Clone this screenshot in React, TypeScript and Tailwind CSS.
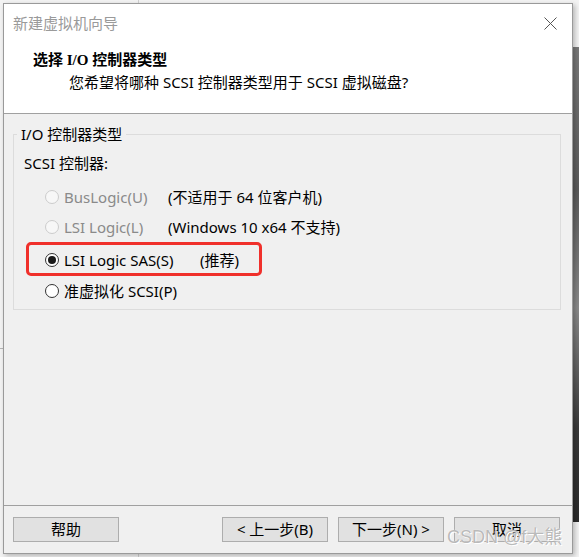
import React from "react";

const FONT = { fontFamily: '"Noto Sans", "Noto Sans CJK SC", sans-serif' };

function Radio({ state }: { state: "disabled" | "checked" | "off" }) {
  if (state === "disabled") {
    return <span className="box-border inline-block h-[14px] w-[14px] shrink-0 rounded-full border border-[#cccccc] bg-[#f7f7f7]" />;
  }
  return (
    <span className="box-border flex h-[14px] w-[14px] shrink-0 items-center justify-center rounded-full border border-[#333333] bg-white">
      {state === "checked" && <span className="block h-[8px] w-[8px] rounded-full bg-[#1a1a1a]" />}
    </span>
  );
}

function Btn({ children }: { children: React.ReactNode }) {
  return (
    <div className="box-border flex h-[25px] w-[106px] items-center justify-center border border-[#adadad] bg-[#e1e1e1] text-[15px] text-black">
      {children}
    </div>
  );
}

export default function App() {
  return (
    <div className="relative h-[557px] w-[579px] overflow-hidden bg-[#f3f3f3]" style={FONT}>
      {/* desktop bits behind the window */}
      <div className="absolute left-[138px] top-0 h-full w-px bg-[#d0d0d0]" />
      <div className="absolute left-0 top-[348px] h-px w-[3px] bg-[#b5b5b5]" />
      <div className="absolute left-[573px] top-[47px] h-[475px] w-[6px] bg-[linear-gradient(180deg,#7a7a7a,#5a5a5a_30%,#8a8a8a_55%,#3a3a3a_80%,#2a2a2a)]" />

      {/* dialog window */}
      <div className="absolute left-[3px] top-[3px] box-border flex h-[551px] w-[570px] flex-col border border-[#9a9a9a] bg-[#f0f0f0] shadow-[2px_2px_5px_rgba(0,0,0,0.25)]">
        {/* white top section */}
        <div className="box-border flex h-[110px] flex-col border-b border-[#a0a0a0] bg-white">
          <div className="flex h-[37px] items-center justify-between pl-[9px] pr-[15px]">
            <span className="text-[15px] leading-[20px] text-[#9a9a9a]">新建虚拟机向导</span>
            <svg width="13" height="13" viewBox="0 0 13 13" className="mt-[1px]">
              <path d="M0.5 0.5 L12.5 12.5 M12.5 0.5 L0.5 12.5" stroke="#555" strokeWidth="1" fill="none" />
            </svg>
          </div>
          <div className="pl-[29px] pt-[9px]">
            <div
              className="text-[15px] font-bold leading-[20px] text-black"
              style={{ fontFamily: '"Liberation Serif", "Noto Sans CJK SC", serif' }}
            >
              选择 I/O 控制器类型
            </div>
            <div className="mt-[2px] pl-[36px] text-[15px] leading-[20px] text-black">
              您希望将哪种 SCSI 控制器类型用于 SCSI 虚拟磁盘?
            </div>
          </div>
        </div>

        {/* body */}
        <div className="flex-1 pl-[9px] pr-[11px] pt-[10px]">
          <fieldset className="box-border border border-[#dcdcdc] pb-[8px]">
            <legend className="ml-[3px] px-[4px] text-[15px] leading-[20px] text-black">I/O 控制器类型</legend>
            <div className="pl-[10px] pt-[9px] text-[15px] leading-[20px] text-black">SCSI 控制器:</div>

            <div className="mt-[14px] flex h-[20px] items-center pl-[31px] text-[15px] leading-[20px]">
              <Radio state="disabled" />
              <span className="ml-[5px] w-[104px] text-[#8a8a8a]">BusLogic(U)</span>
              <span className="text-black">(不适用于 64 位客户机)</span>
            </div>
            <div className="mt-[10px] flex h-[20px] items-center pl-[31px] text-[15px] leading-[20px]">
              <Radio state="disabled" />
              <span className="ml-[5px] w-[104px] text-[#8a8a8a]">LSI Logic(L)</span>
              <span className="text-black">(Windows 10 x64 不支持)</span>
            </div>
            <div className="relative mt-[13px] flex h-[20px] items-center pl-[31px] text-[15px] leading-[20px]">
              <Radio state="checked" />
              <span className="ml-[5px] w-[136px] text-black">LSI Logic SAS(S)</span>
              <span className="text-black">(推荐)</span>
              <div className="absolute left-[12px] top-[-8px] box-border h-[34px] w-[236px] rounded-[5px] border-[3px] border-[#f0302b]" />
            </div>
            <div className="mt-[11px] flex h-[20px] items-center pl-[31px] text-[15px] leading-[20px]">
              <Radio state="off" />
              <span className="ml-[5px] text-black">准虚拟化 SCSI(P)</span>
            </div>
          </fieldset>
        </div>

        {/* footer */}
        <div className="box-border flex h-[48px] items-center justify-between border-t border-[#a0a0a0] pl-[9px] pr-[12px]">
          <Btn>帮助</Btn>
          <div className="flex gap-[10px]">
            <Btn>&lt; 上一步(B)</Btn>
            <Btn>下一步(N) &gt;</Btn>
            <Btn>取消</Btn>
          </div>
        </div>
      </div>

      {/* watermark */}
      <div
        className="absolute left-[447px] top-[526px] text-[18px] leading-[22px] text-[#a8a8a8]/80"
        style={{ fontFamily: '"Liberation Sans", "Noto Sans CJK SC", sans-serif', textShadow: "0 0 1px #ffffff, 1px 1px 0 #ffffff" }}
      >
        CSDN @f大熊
      </div>
    </div>
  );
}
